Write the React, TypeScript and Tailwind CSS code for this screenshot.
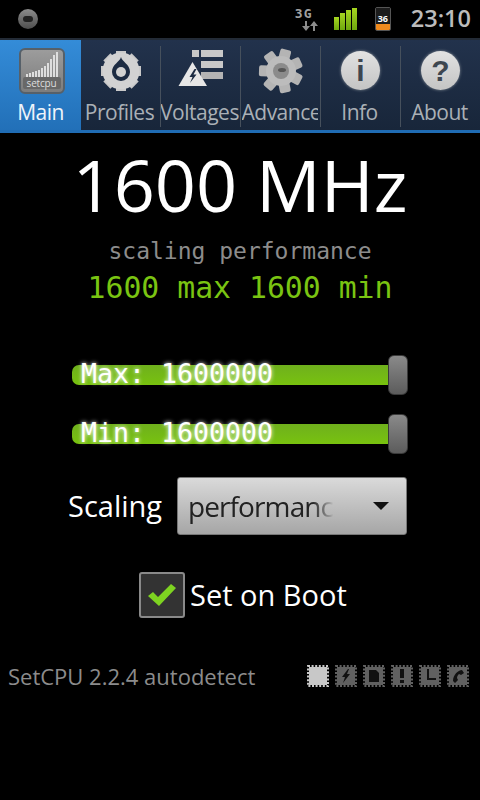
const sans = "font-['Open_Sans',sans-serif]";
const mono = "font-['DejaVu_Sans_Mono',monospace]";

function MainIcon() {
  const bars = [3, 4, 5, 6, 7, 9, 11, 14, 18, 22, 25];
  return (
    <div className="flex h-[46px] w-[46px] flex-col items-center justify-end rounded-[6px] border-2 border-[#566069] bg-gradient-to-b from-[#9c9c9c] to-[#7d7d7d] pb-[3px]">
      <div className="flex h-[26px] items-end gap-px">
        {bars.map((h, i) => (
          <div key={i} className="w-[2px] bg-[#dedede]" style={{ height: h }} />
        ))}
      </div>
      <div className={`w-[38px] rounded-[2px] bg-[#686868] text-center text-[10px] leading-[12px] tracking-[-0.2px] text-[#ddd] ${sans}`}>setcpu</div>
    </div>
  );
}

function ProfilesIcon() {
  const teeth = [0, 45, 90, 135, 180, 225, 270, 315];
  return (
    <svg width="42" height="42" viewBox="0 0 42 42">
      {teeth.map((a) => (
        <rect key={a} x="16" y="1" width="10" height="8" fill="#c9c9c9" transform={`rotate(${a} 21 21)`} />
      ))}
      <circle cx="21" cy="21" r="18.5" fill="#d2d2d2" />
      <path d="M21 7 C22 12 30 14 30 22 A9 9 0 1 1 12 22 C12 14 20 12 21 7Z" fill="#1c2b42" />
      <circle cx="21" cy="22" r="5" fill="#d2d2d2" />
    </svg>
  );
}

function VoltagesIcon() {
  return (
    <svg width="48" height="44" viewBox="0 0 48 44">
      <rect x="15" y="1" width="7" height="7" fill="#c8c8c8" />
      <rect x="24" y="1" width="22" height="7" fill="#c8c8c8" />
      <rect x="24" y="12" width="22" height="7" fill="#c8c8c8" />
      <rect x="24" y="23" width="22" height="7" fill="#b4b4b4" />
      <path d="M15.5 13 L30 37 L1.5 37Z" fill="#e6e6e6" />
      <path d="M17.5 20 L12.5 28 L15.5 28 L13 34 L19.5 25.5 L16.5 25.5 L19.5 20Z" fill="#1c2b42" />
    </svg>
  );
}

function AdvancedIcon() {
  const teeth = [0, 51, 103, 154, 206, 257, 309];
  return (
    <svg width="46" height="46" viewBox="0 0 46 46">
      {teeth.map((a) => (
        <rect key={a} x="17" y="1" width="11" height="12" rx="2" fill="#b4b4b4" transform={`rotate(${a + 15} 23 23)`} />
      ))}
      <circle cx="23" cy="23" r="15" fill="#bcbcbc" />
      <circle cx="23" cy="23" r="8" fill="#8b8b8b" />
      <ellipse cx="24" cy="22" rx="4" ry="2" fill="#555" />
    </svg>
  );
}

function RoundIcon({ glyph }: { glyph: string }) {
  return (
    <div className="flex h-[39px] w-[39px] items-center justify-center rounded-full bg-gradient-to-b from-[#e2e2e2] to-[#c4c4c4] shadow-[0_0_3px_#8a919a]">
      <span className="font-['Liberation_Sans',sans-serif] text-[30px] font-bold leading-none text-[#3d4650]">{glyph}</span>
    </div>
  );
}

function Tab({ label, icon, active, clip }: { label: string; icon: React.ReactNode; active?: boolean; clip?: boolean }) {
  return (
    <div
      className={`flex h-full flex-col items-center overflow-hidden ${
        active ? "w-[81px] bg-gradient-to-b from-[#348cd8] to-[#2270b8]" : "w-[79px] pr-[2px]"
      }`}
    >
      <div className="flex h-[55px] w-full items-center justify-center pt-[6px] pl-[2px]">{icon}</div>
      <span
        className={`mt-[2px] whitespace-nowrap text-[21px] leading-[30px] tracking-[-0.5px] ${sans} ${
          active ? "text-[#eef4fa]" : "text-[#aab0b6]"
        } ${clip ? "w-[76px] overflow-hidden" : ""}`}
      >
        {label}
      </span>
    </div>
  );
}

function Divider() {
  return <div className="my-[6px] h-[81px] w-px shrink-0 bg-[#46505c]" />;
}

function StatusBar() {
  return (
    <div className="flex h-[38px] items-center bg-black pl-[18px] pr-[9px]">
      <div className="flex h-[20px] w-[20px] items-center justify-center rounded-full bg-gradient-to-b from-[#8c8c8c] to-[#4e4e4e]">
        <div className="h-[6px] w-[10px] rounded-[3px] bg-[#222]" />
      </div>
      <div className="ml-auto flex w-[24px] flex-col items-start">
        <span className={`text-[13px] font-bold leading-[11px] tracking-[1px] text-[#a0a0a0] ${mono}`}>3G</span>
        <svg className="ml-[7px] mt-[2px]" width="17" height="10" viewBox="0 0 17 10">
          <path d="M3 0h2v5h3L4 10 0 5h3zM12 0l4 5h-3v5h-2V5H8z" fill="#8c8c8c" />
        </svg>
      </div>
      <div className="ml-[15px] flex h-[22px] items-end gap-px">
        {[13, 17, 20, 22].map((h) => (
          <div key={h} className="w-[5px] bg-gradient-to-b from-[#a6d620] to-[#6fa80e]" style={{ height: h }} />
        ))}
      </div>
      <div className="ml-[18px] flex h-[24px] w-[16px] flex-col overflow-hidden rounded-[2px] border border-[#555]">
        <div className="flex h-[16px] items-end justify-center bg-[#1c1c1c] text-[9px] font-bold leading-[10px] text-white">36</div>
        <div className="flex-1 bg-[#f08a1d]" />
      </div>
      <span className={`ml-[20px] text-[23.5px] font-semibold leading-none text-[#bcbcbc] ${sans}`}>23:10</span>
    </div>
  );
}

function Slider({ label }: { label: string }) {
  return (
    <div className="relative ml-[72px] flex h-[40px] w-[336px] items-center">
      <div className="h-[20px] w-full rounded-[7px] bg-gradient-to-b from-[#6fb01c] to-[#78c20e]" />
      <span className={`absolute left-[9px] top-[4px] text-[26.6px] leading-[30px] text-white [text-shadow:0_0_4px_#ffffff] ${mono}`}>
        {label}
      </span>
      <div className="absolute right-0 top-0 h-[40px] w-[20px] rounded-[6px] border border-[#3a3a3a] bg-gradient-to-b from-[#8a8a8a] to-[#5c5c5c]" />
    </div>
  );
}

function Chip({ on, children }: { on?: boolean; children?: React.ReactNode }) {
  const c = on ? "#c8c8c8" : "#606060";
  return (
    <svg width="22" height="22" viewBox="0 0 22 22">
      <rect x="1" y="1" width="20" height="20" fill="none" stroke={c} strokeWidth="2" strokeDasharray="2 1.6" />
      <rect x="2" y="2" width="18" height="18" fill={c} />
      {children}
    </svg>
  );
}

export default function App() {
  return (
    <div className="flex h-[800px] w-[480px] flex-col overflow-hidden bg-black">
      <StatusBar />
      <div className="flex h-[95px] flex-col">
        <div className="flex h-[92px] items-stretch border-t-2 border-[#232b36] bg-gradient-to-b from-[#22324c] to-[#18263a]">
          <Tab label="Main" active icon={<MainIcon />} />
          <Tab label="Profiles" icon={<ProfilesIcon />} />
          <Divider />
          <Tab label="Voltages" icon={<VoltagesIcon />} />
          <Divider />
          <Tab label="Advanced" clip icon={<AdvancedIcon />} />
          <Divider />
          <Tab label="Info" icon={<RoundIcon glyph="i" />} />
          <Divider />
          <Tab label="About" icon={<RoundIcon glyph="?" />} />
        </div>
        <div className="h-[3px] bg-[#1f6cb4]" />
      </div>

      <div className={`mt-[6px] text-center text-[72px] leading-[90px] text-white ${sans}`}>1600 MHz</div>
      <div className={`mt-[7px] text-center text-[23px] leading-[30px] text-[#8c8c8c] ${mono}`}>scaling performance</div>
      <div className={`mt-[2px] text-center text-[29.8px] leading-[40px] text-[#7ac412] ${mono}`}>1600 max 1600 min</div>

      <div className="mt-[47px] flex flex-col gap-[19px]">
        <Slider label="Max: 1600000" />
        <Slider label="Min: 1600000" />
      </div>

      <div className="mt-[23px] flex items-center pl-[68px]">
        <span className={`w-[109px] text-[29px] leading-[40px] text-white ${sans}`}>Scaling</span>
        <div className="flex h-[58px] w-[230px] items-center rounded-[3px] border border-[#777] bg-gradient-to-b from-[#dadada] to-[#a6a6a6] pl-[10px]">
          <span className={`w-[146px] overflow-hidden whitespace-nowrap text-[28px] leading-[40px] tracking-[-0.9px] text-[#222] [mask-image:linear-gradient(to_right,#000_85%,transparent)] ${sans}`}>performance</span>
          <div className="ml-[39px] h-0 w-0 border-x-[8px] border-t-[8px] border-x-transparent border-t-[#111]" />
        </div>
      </div>

      <div className="mt-[37px] flex items-center pl-[139px]">
        <div className="flex h-[46px] w-[46px] items-center justify-center rounded-[3px] border-2 border-[#8a8a8a] bg-[#333]">
          <svg width="28" height="24" viewBox="0 0 28 24">
            <path d="M0 13 L5 9 L10 14 L23 1 L28 5 L11 23Z" fill="#7ed321" />
          </svg>
        </div>
        <span className={`ml-[5px] text-[29px] leading-[40px] text-white ${sans}`}>Set on Boot</span>
      </div>

      <div className="mt-[43px] flex items-center pl-[8px]">
        <span className={`text-[22px] leading-[30px] text-[#8c8c8c] ${sans}`}>SetCPU 2.2.4 autodetect</span>
        <div className="ml-auto mr-[11px] flex gap-[6px]">
          <Chip on />
          <Chip><path d="M13 4 L7 12 L10 12 L8 18 L15 9 L12 9 L14 4Z" fill="#111" /></Chip>
          <Chip><path d="M6 5h7l3 3v9H6z" fill="#111" /></Chip>
          <Chip><path d="M9 4h4v9H9zM9 15h4v3H9z" fill="#111" /></Chip>
          <Chip><path d="M8 4h2v9h7v2H8z" fill="#111" /></Chip>
          <Chip><path d="M6 16 C6 10 11 5 15 5 L17 8 L14 10 L12 9 C11 10 10 11 10 13 L11 15 L8 18Z" fill="#111" /></Chip>
        </div>
      </div>
    </div>
  );
}
